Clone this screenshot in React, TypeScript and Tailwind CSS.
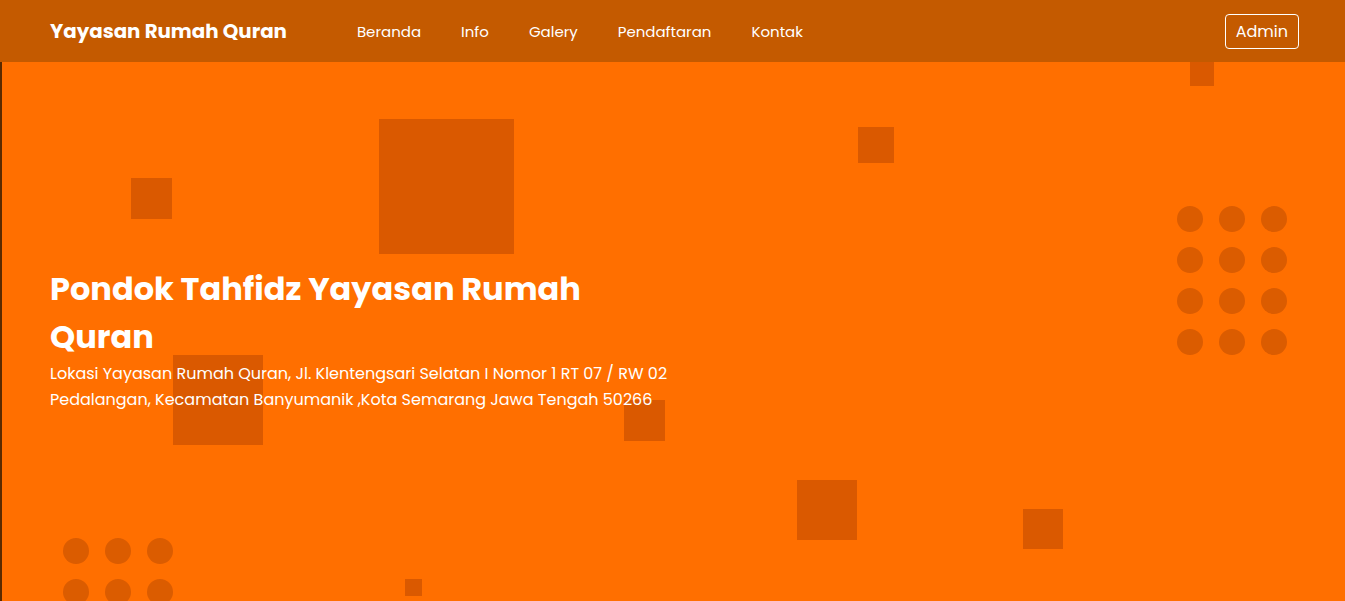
import React from "react";

const navLinks = ["Beranda", "Info", "Galery", "Pendaftaran", "Kontak"];

// decorative squares: [left, top, size]
const squares: [number, number, number][] = [
  [1190, 0, 24],
  [379, 57, 135],
  [858, 65, 36],
  [131, 116, 41],
  [173, 293, 90],
  [624, 338, 41],
  [797, 418, 60],
  [1023, 447, 40],
  [405, 517, 17],
];

const Dots = ({ rows, className }: { rows: number; className: string }) => (
  <div className={`absolute grid grid-cols-3 gap-x-4 gap-y-[15px] ${className}`}>
    {Array.from({ length: rows * 3 }).map((_, i) => (
      <span key={i} className="block h-[26px] w-[26px] rounded-full bg-[#db5c00]" />
    ))}
  </div>
);

export default function App() {
  return (
    <div className="min-h-screen bg-[#ff6f00] font-['Poppins','Inter',sans-serif] text-white">
      <nav className="flex h-[62px] items-center bg-[#c45a00] pl-[50px] pr-[46px] pt-[2px]">
        <a href="#" className="text-[19.8px] font-bold">
          Yayasan Rumah Quran
        </a>
        <ul className="ml-[70px] flex gap-10 text-[15px]">
          {navLinks.map((link) => (
            <li key={link}>
              <a href="#">{link}</a>
            </li>
          ))}
        </ul>
        <button className="-mt-[2px] ml-auto h-[35px] rounded-[4px] border border-white px-[10px] pt-[1px] text-[16px]">
          Admin
        </button>
      </nav>

      <section className="relative h-[539px] overflow-hidden border-l-2 border-[#5a2a00]">
        {squares.map(([left, top, size], i) => (
          <span
            key={i}
            className="absolute bg-[#da5900]"
            style={{ left: left - 2, top, width: size, height: size }}
          />
        ))}
        <Dots rows={4} className="left-[1175px] top-[144px]" />
        <Dots rows={2} className="left-[61px] top-[476px]" />

        <div className="relative pl-[48px] pt-[203px]">
          <h1 className="w-[580px] text-[32px] font-bold leading-[48px]">
            Pondok Tahfidz Yayasan Rumah Quran
          </h1>
          <p className="text-[16px] leading-[26px]">
            Lokasi Yayasan Rumah Quran, Jl. Klentengsari Selatan I Nomor 1 RT 07 / RW 02
            <br />
            Pedalangan, Kecamatan Banyumanik ,Kota Semarang Jawa Tengah 50266
          </p>
        </div>
      </section>
    </div>
  );
}
